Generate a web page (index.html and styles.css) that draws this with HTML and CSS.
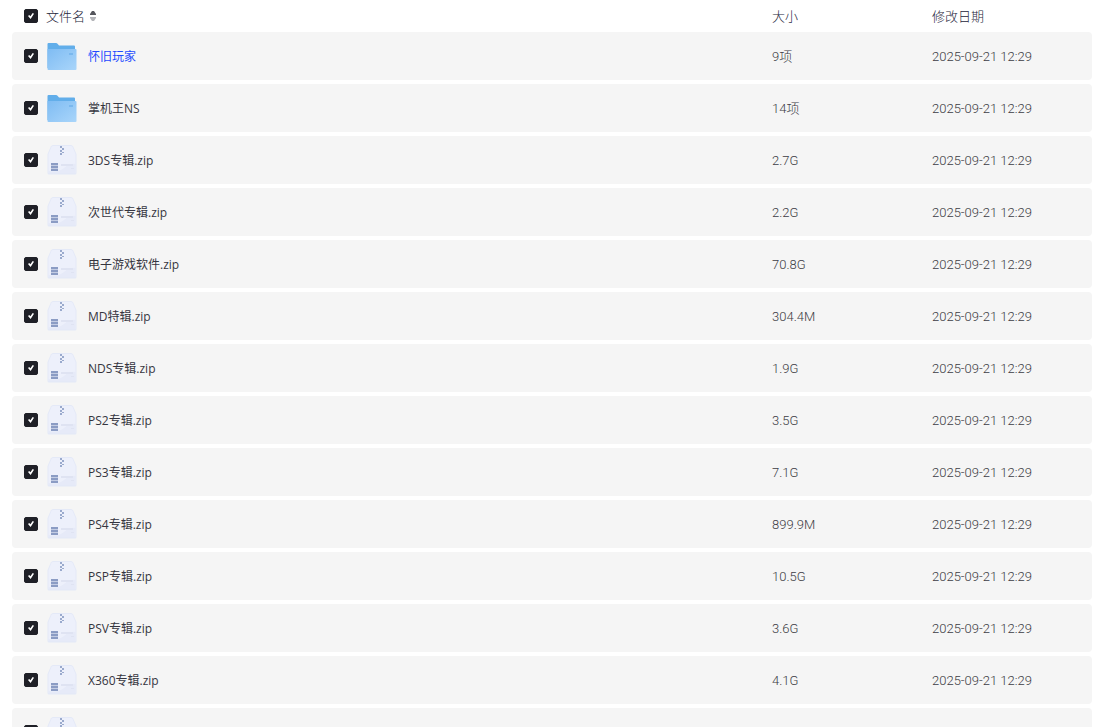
FILE: index.html
```html
<!DOCTYPE html>
<html lang="zh-CN">

<head>
    <meta charset="UTF-8">
    <meta name="viewport" content="width=device-width, initial-scale=1.0">
    <title>文件列表</title>
    <link rel="stylesheet" href="styles.css">
</head>

<body>
    <!-- 图标 -->
    <svg class="icon-defs" aria-hidden="true">
        <defs>
            <linearGradient id="folderFront" x1="0" y1="0" x2="1" y2="1">
                <stop offset="0" stop-color="#7fbcf3" />
                <stop offset="1" stop-color="#a9d5fa" />
            </linearGradient>
            <symbol id="icon-folder" viewBox="0 0 32 32">
                <path fill="#62aeea" d="M2.500 3h7.500q1 0 1.500.700L13 5.500h15q1 0 1 1V28H1.500V4q0-1 1-1z" />
                <path fill="url(#folderFront)" d="M2 9h27.500q1 0 1 1v19q0 1-1 1h-27q-1 0-1-1V9z" />
                <path fill="#7ab8ee" d="M23 13h4v2h-4z" />
            </symbol>
            <symbol id="icon-zip" viewBox="0 0 32 32">
                <path fill="#e4e9f7" d="M7 1h18q1.500 0 2.200 1.500L30.500 10v19q0 1.500-1.500 1.500H3q-1.500 0-1.500-1.500V10l3.300-7.500Q5.500 1 7 1z" />
                <path fill="#edf0fb" d="M7 2h18q1 0 1.500 1L29.500 10v19H2.500V10L5.500 3q.500-1 1.500-1z" />
                <path fill="#e6eaf8" d="M2.500 27Q12 29 18 24t11.500-4v9h-27z" />
                <path fill="#9aaacd" d="M14 2h2v2h-2zM16 4h2v2h-2zM14 6h2v2h-2zM16 8h2v1h-2zM14 9h2v2h-2z" />
                <path fill="#c3cce3" d="M5 19h7v8H5z" />
                <path fill="#8b9cc4" d="M5 19h7v2H5zM5 22h7v2H5zM5 25h7v2H5z" />
                <path fill="#dfe3f2" d="M15 20h12v2H15zM25 24h3v1h-3z" />
            </symbol>
        </defs>
    </svg>

    <!-- 文件列表 -->
    <table class="file-table">
        <thead>
            <tr>
                <th class="col-name">
                    <div class="name-cell">
                        <input type="checkbox" id="checkAll" aria-label="全选" checked>
                        <button class="sort-btn" type="button">文件名
                            <svg class="sort-icon" viewBox="0 0 6 10" aria-hidden="true">
                                <path fill="#55565c" d="M2 0h2l2 3v1H0V3z" />
                                <path fill="#b4b5b9" d="M2 10h2l2-3V6H0v1z" />
                            </svg>
                        </button>
                    </div>
                </th>
                <th class="col-size">大小</th>
                <th class="col-date">修改日期</th>
            </tr>
        </thead>
        <tbody id="fileList"></tbody>
    </table>

    <script src="files.js"></script>
</body>

</html>
```

FILE: styles.css
```css
/* Reset */
* {
    margin: 0;
    padding: 0;
    box-sizing: border-box;
}

body {
    background-color: #fff;
    font-family: "Open Sans", "Noto Sans CJK SC", sans-serif;
    font-size: 12px;
    line-height: 18px;
    color: #35353f;
    height: 100vh;
    padding: 0 10px 0 12px;
    overflow: hidden;
}

.icon-defs {
    position: absolute;
    width: 0;
    height: 0;
}

/* Table */
.file-table {
    width: 100%;
    table-layout: fixed;
    border-collapse: separate;
    border-spacing: 0 4px;
}

.file-table th {
    height: 24px;
    font-family: Roboto, "Noto Sans CJK SC", sans-serif;
    font-size: 13px;
    font-weight: 300;
    line-height: 17px;
    text-align: left;
    color: #25253a;
}

.file-table td {
    height: 48px;
    line-height: 17px;
    background-color: #f5f5f5;
}

.file-table td:first-child {
    border-radius: 4px 0 0 4px;
}

.file-table td:last-child {
    border-radius: 0 4px 4px 0;
}

.col-size,
.col-date {
    width: 160px;
}

.file-table .meta {
    font-family: Roboto, "Noto Sans CJK SC", sans-serif;
    font-size: 13px;
    font-weight: 300;
    color: #3c3c44;
}

/* Name column */
.name-cell {
    display: flex;
    align-items: center;
    gap: 8px;
    padding-left: 12px;
}

.name-cell a {
    display: flex;
    align-items: center;
    gap: 10px;
    color: #35353f;
    text-decoration: none;
}

.name-cell a:hover,
.name-cell a.active {
    color: #1f4bff;
}

.file-icon {
    width: 32px;
    height: 32px;
}

/* Checkbox */
input[type="checkbox"] {
    appearance: none;
    display: grid;
    place-content: center;
    width: 14px;
    height: 14px;
    border: 1px solid #1f2027;
    border-radius: 2px;
    cursor: pointer;
}

input[type="checkbox"]:checked {
    background-color: #1f2027;
}

input[type="checkbox"]:checked::before {
    content: "";
    width: 6px;
    height: 6px;
    background-color: #fff;
    clip-path: polygon(0 50%, 20% 34%, 40% 56%, 78% 0, 100% 14%, 44% 100%);
}

/* Sort button */
.sort-btn {
    display: flex;
    align-items: center;
    gap: 5px;
    border: none;
    background: none;
    font: inherit;
    color: inherit;
    cursor: pointer;
}

.sort-icon {
    width: 6px;
    height: 10px;
}
```

FILE: files.js
```js
const date = "2025-09-21 12:29";

const files = [
    { name: "怀旧玩家", size: "9项", type: "folder", active: true },
    { name: "掌机王NS", size: "14项", type: "folder" },
    { name: "3DS专辑.zip", size: "2.7G", type: "zip" },
    { name: "次世代专辑.zip", size: "2.2G", type: "zip" },
    { name: "电子游戏软件.zip", size: "70.8G", type: "zip" },
    { name: "MD特辑.zip", size: "304.4M", type: "zip" },
    { name: "NDS专辑.zip", size: "1.9G", type: "zip" },
    { name: "PS2专辑.zip", size: "3.5G", type: "zip" },
    { name: "PS3专辑.zip", size: "7.1G", type: "zip" },
    { name: "PS4专辑.zip", size: "899.9M", type: "zip" },
    { name: "PSP专辑.zip", size: "10.5G", type: "zip" },
    { name: "PSV专辑.zip", size: "3.6G", type: "zip" },
    { name: "X360专辑.zip", size: "4.1G", type: "zip" },
    { name: "", size: "", type: "zip" }
];

// 渲染文件列表
document.getElementById("fileList").innerHTML = files.map((file, i) => `
    <tr>
        <td>
            <div class="name-cell">
                <input type="checkbox" id="file${i}" aria-labelledby="name${i}" checked>
                <a href="#" id="name${i}" class="${file.active ? "active" : ""}">
                    <svg class="file-icon" aria-hidden="true"><use href="#icon-${file.type}" /></svg>
                    ${file.name}
                </a>
            </div>
        </td>
        <td class="meta">${file.size}</td>
        <td class="meta">${file.size ? date : ""}</td>
    </tr>
`).join("");

// 全选
document.getElementById("checkAll").addEventListener("change", (e) => {
    document.querySelectorAll("#fileList input").forEach(box => {
        box.checked = e.target.checked;
    });
});
```
